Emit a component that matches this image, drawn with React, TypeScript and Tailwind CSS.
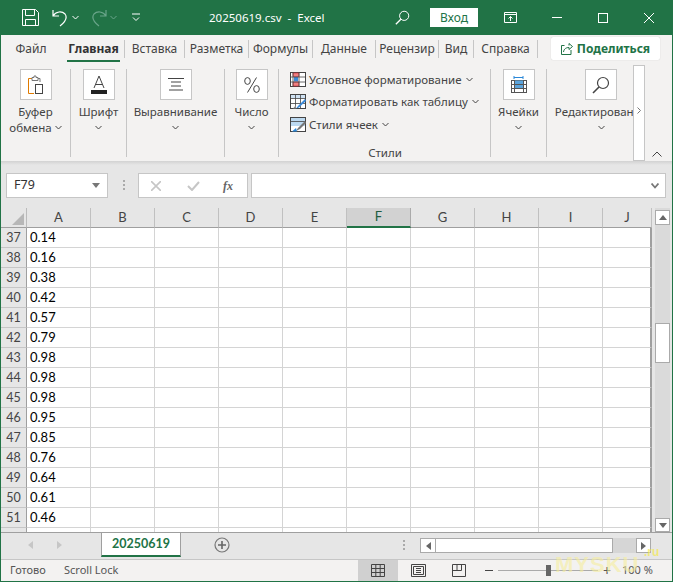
import React from 'react'

const tabs = [
  { label: 'Вставка', w: 59 },
  { label: 'Разметка', w: 63 },
  { label: 'Формулы', w: 63 },
  { label: 'Данные', w: 62 },
  { label: 'Рецензир', w: 62 },
  { label: 'Вид', w: 34 },
  { label: 'Справка', w: 63 },
]

const cols = ['A', 'B', 'C', 'D', 'E', 'F', 'G', 'H', 'I', 'J']

const rows = [
  [37, '0.14'], [38, '0.16'], [39, '0.38'], [40, '0.42'], [41, '0.57'],
  [42, '0.79'], [43, '0.98'], [44, '0.98'], [45, '0.98'], [46, '0.95'],
  [47, '0.85'], [48, '0.76'], [49, '0.64'], [50, '0.61'], [51, '0.46'], ['', ''],
]

function Chevron({ className = '' }: { className?: string }) {
  return (
    <svg width="7" height="5" viewBox="0 0 7 5" className={className}>
      <path d="M0.5 1 L3.5 4 L6.5 1" fill="none" stroke="currentColor" strokeWidth="1" />
    </svg>
  )
}

function ClipboardIcon() {
  return (
    <svg width="18" height="20" viewBox="0 0 18 20">
      <path d="M5 3.5H1.5V18.5H7" fill="none" stroke="#e07b00" />
      <path d="M11 3.5H13V7" fill="none" stroke="#777" />
      <path d="M5 5.5V2.5H7V1H9V2.5H11V5.5Z" fill="#fff" stroke="#777" />
      <rect x="8.5" y="9.5" width="7" height="9" fill="#fff" stroke="#444" />
    </svg>
  )
}

function FontIcon() {
  return (
    <svg width="18" height="20" viewBox="0 0 18 20">
      <path d="M4 13 L9 1 L14 13 M5.5 9.5 H12.5" fill="none" stroke="#444" />
      <rect x="1" y="15" width="16" height="4" fill="#222" />
    </svg>
  )
}

function AlignIcon() {
  return (
    <svg width="16" height="15" viewBox="0 0 16 15">
      <path d="M0 1.5H16M3 5H13M3 9H13M1 13H15" fill="none" stroke="#444" />
    </svg>
  )
}

function PercentIcon() {
  return (
    <svg width="16" height="16" viewBox="0 0 16 16">
      <ellipse cx="3.5" cy="4" rx="2.8" ry="3.4" fill="none" stroke="#444" />
      <ellipse cx="12.5" cy="12" rx="2.8" ry="3.4" fill="none" stroke="#444" />
      <path d="M12.5 0.5L3.5 15.5" fill="none" stroke="#444" />
    </svg>
  )
}

function SearchIcon({ color = '#444', size = 18 }: { color?: string; size?: number }) {
  return (
    <svg width={size} height={size} viewBox="0 0 18 18">
      <circle cx="11" cy="7" r="5.5" fill="none" stroke={color} strokeWidth="1.2" />
      <path d="M7 11 L1 17" fill="none" stroke={color} strokeWidth="1.6" />
    </svg>
  )
}

function CellsIcon() {
  return (
    <svg width="16" height="18" viewBox="0 0 16 18">
      <path d="M3 1.5H12M3 0V3M12 0V3" fill="none" stroke="#2b88d8" />
      <rect x="0.5" y="4.5" width="15" height="12" fill="#fff" stroke="#555" />
      <rect x="3.5" y="4.5" width="9" height="8" fill="#5ba4dc" />
      <path d="M0 8.5H16M0 12.5H16M3.5 4V17M12.5 4V17" fill="none" stroke="#555" />
    </svg>
  )
}

function CondFormatIcon() {
  return (
    <svg width="16" height="15" viewBox="0 0 16 15">
      <rect x="0.5" y="0.5" width="15" height="14" fill="#fff" stroke="#444" />
      <rect x="3" y="1" width="6" height="3.5" fill="#f08080" stroke="#c23" strokeWidth="0.6" />
      <rect x="4" y="5" width="4" height="4.5" fill="#3b8ad9" />
      <rect x="3" y="10" width="6" height="4" fill="#f08080" stroke="#c23" strokeWidth="0.6" />
      <path d="M0 5H16M0 10H16M3 0V15M9 0V15" fill="none" stroke="#444" strokeWidth="0.8" />
    </svg>
  )
}

function TableFormatIcon() {
  return (
    <svg width="16" height="15" viewBox="0 0 16 15">
      <rect x="0.5" y="0.5" width="15" height="14" fill="#fff" stroke="#444" />
      <rect x="1" y="1" width="14" height="3" fill="#cfe2f3" />
      <path d="M0 4.5H16M0 9.5H16M5.5 0V15M10.5 0V15" fill="none" stroke="#444" strokeWidth="0.8" />
      <path d="M15 5 L8 12 L6 14.5 L9 13.5 L16 7Z" fill="#3b8ad9" />
      <path d="M6 11 L3 14.5H6Z" fill="#888" />
    </svg>
  )
}

function CellStyleIcon() {
  return (
    <svg width="16" height="15" viewBox="0 0 16 15">
      <rect x="0.5" y="0.5" width="15" height="14" fill="#fff" stroke="#444" />
      <rect x="1" y="1" width="14" height="8" fill="#bcd9f0" />
      <path d="M0 4.5H16" fill="none" stroke="#444" strokeWidth="0.8" />
      <path d="M15 4 L8 11 L6 14 L10 12 L16 6Z" fill="#777" />
      <path d="M6 11 L2 14.5H7Z" fill="#2b88d8" />
    </svg>
  )
}

function RibbonGroup({ w, icon, lines, innerChevron }: { w: number; icon: React.ReactNode; lines: string[]; innerChevron?: boolean }) {
  return (
    <>
      <div className="flex flex-col items-center pt-[7px] shrink-0" style={{ width: w }}>
        <div className="w-[32px] h-[31px] bg-white border border-[#c6c6c6] flex items-center justify-center">{icon}</div>
        <div className="mt-[4px] text-center leading-[16px] whitespace-nowrap">
          {lines.map((l, i) => (
            <div key={l}>
              {l}
              {innerChevron && i === lines.length - 1 && <Chevron className="inline ml-[3px] mb-[2px]" />}
            </div>
          ))}
          {!innerChevron && <Chevron className="mx-auto mt-[5px]" />}
        </div>
      </div>
      <i className="w-px h-[88px] mt-[7px] bg-[#c6c6c6] shrink-0" />
    </>
  )
}

function StyleRow({ icon, label }: { icon: React.ReactNode; label: string }) {
  return (
    <div className="h-[23px] flex items-center gap-[3px] whitespace-nowrap">
      {icon}
      <span>{label}</span>
      <Chevron className="ml-[1px]" />
    </div>
  )
}

export default function App() {
  return (
    <div className="relative w-[673px] h-[582px] overflow-hidden bg-[#f3f2f1] border-x border-b border-[#217346] text-[12px] text-[#444] flex flex-col font-['Noto_Sans',sans-serif]">
      {/* title bar */}
      <div className="h-[35px] -mx-px shrink-0 bg-[#217346] text-white flex items-center">
        <svg width="17" height="17" viewBox="0 0 17 17" className="ml-[22px] shrink-0">
          <path d="M0.5 0.5H13.5L16.5 3.5V16.5H0.5Z M3.5 0.5V6.5H12.5V0.5 M3.5 16.5V10.5H13.5V16.5" fill="none" stroke="#fff" />
        </svg>
        <svg width="16" height="18" viewBox="0 0 16 18" className="ml-[13px] shrink-0">
          <path d="M1 1V7H7 M1 7 C4 2 10 2 13 5 C16 9 13 13 8 17" fill="none" stroke="#fff" strokeWidth="1.2" />
        </svg>
        <Chevron className="ml-[4px] shrink-0" />
        <svg width="16" height="18" viewBox="0 0 16 18" className="ml-[12px] shrink-0">
          <path d="M15 1V7H9 M15 7 C12 2 6 2 3 5 C0 9 3 13 8 17" fill="none" stroke="#6aa58a" strokeWidth="1.2" />
        </svg>
        <Chevron className="ml-[3px] text-[#6aa58a] shrink-0" />
        <svg width="8" height="9" viewBox="0 0 8 9" className="ml-[15px] shrink-0">
          <path d="M0 1H8M1 4.5L4 7.5L7 4.5" fill="none" stroke="#fff" />
        </svg>
        <div className="ml-[69px] w-[112px] shrink-0 whitespace-nowrap text-[11.5px]">20250619.csv&nbsp; -&nbsp; Excel</div>
        <div className="ml-[74px] shrink-0"><SearchIcon color="#fff" size={15} /></div>
        <div className="ml-[20px] w-[48px] h-[19px] shrink-0 bg-white text-[#217346] flex items-center justify-center text-[12px]">Вход</div>
        <svg width="13" height="11" viewBox="0 0 13 11" className="ml-[26px] shrink-0">
          <path d="M0.5 0.5H12.5V10.5H0.5Z M0.5 2.5H12.5 M6.5 9V4.5 M4.5 6.5L6.5 4.5L8.5 6.5" fill="none" stroke="#fff" />
        </svg>
        <div className="ml-[35px] w-[10px] h-px shrink-0 bg-white" />
        <div className="ml-[36px] w-[10px] h-[10px] shrink-0 border border-white" />
        <svg width="10" height="10" viewBox="0 0 10 10" className="ml-[36px] shrink-0">
          <path d="M0 0L10 10M10 0L0 10" stroke="#fff" />
        </svg>
      </div>

      {/* ribbon tabs */}
      <div className="h-[27px] shrink-0 flex items-center">
        <div className="w-[60px] text-center">Файл</div>
        <div className="relative ml-[6px] w-[53px] h-full flex items-center justify-center font-bold text-[#333] whitespace-nowrap">
          Главная
          <span className="absolute left-0 right-0 bottom-0 h-[2px] bg-[#217346]" />
        </div>
        <div className="w-[4px]" />
        <i className="w-px h-[18px] bg-[#c6c6c6]" />
        {tabs.map((t) => (
          <React.Fragment key={t.label}>
            <div className="text-center whitespace-nowrap" style={{ width: t.w }}>{t.label}</div>
            <i className="w-px h-[18px] bg-[#c6c6c6]" />
          </React.Fragment>
        ))}
        <div className="ml-[13px] w-[109px] h-[23px] bg-white rounded-[2px] shadow-[0_0_1px_#bbb] flex items-center justify-center gap-[4px] font-bold text-[#217346]">
          <svg width="12" height="12" viewBox="0 0 12 12">
            <path d="M3.5 2.5H0.5V11.5H10V7 M2.5 9C3 5.5 5.5 4.5 8 4.5V6.5L11.5 3.5L8 0.5V2.5" fill="none" stroke="#217346" />
          </svg>
          Поделиться
        </div>
      </div>

      {/* ribbon */}
      <div className="h-[99px] shrink-0 flex text-[11.5px]">
        <RibbonGroup w={69} icon={<ClipboardIcon />} lines={['Буфер', 'обмена']} innerChevron />
        <RibbonGroup w={55} icon={<FontIcon />} lines={['Шрифт']} />
        <RibbonGroup w={97} icon={<AlignIcon />} lines={['Выравнивание']} />
        <RibbonGroup w={53} icon={<PercentIcon />} lines={['Число']} />
        <div className="w-[211px] shrink-0 flex flex-col pl-[11px] pt-[6px]">
          <StyleRow icon={<CondFormatIcon />} label="Условное форматирование" />
          <StyleRow icon={<TableFormatIcon />} label="Форматировать как таблицу" />
          <StyleRow icon={<CellStyleIcon />} label="Стили ячеек" />
          <div className="mt-[8px] pr-[10px] text-center">Стили</div>
        </div>
        <i className="w-px h-[88px] mt-[7px] bg-[#c6c6c6] shrink-0" />
        <RibbonGroup w={55} icon={<CellsIcon />} lines={['Ячейки']} />
        <div className="w-[86px] shrink-0 overflow-hidden">
          <div className="w-[108px] flex flex-col items-center pt-[7px]">
            <div className="w-[32px] h-[31px] bg-white border border-[#c6c6c6] flex items-center justify-center"><SearchIcon /></div>
            <div className="mt-[4px] leading-[16px] whitespace-nowrap">Редактирование</div>
            <Chevron className="mt-[5px]" />
          </div>
        </div>
        <div className="w-[12px] h-[96px] mt-[3px] bg-white border border-[#c6c6c6] flex items-center justify-center text-[#777] shrink-0">
          <svg width="4" height="7" viewBox="0 0 4 7" className="-mt-[6px]">
            <path d="M0.5 0.5L3.5 3.5L0.5 6.5" fill="none" stroke="currentColor" />
          </svg>
        </div>
        <svg width="10" height="6" viewBox="0 0 10 6" className="ml-[7px] mt-[89px]">
          <path d="M0.5 5.5L5 1L9.5 5.5" fill="none" stroke="#444" />
        </svg>
      </div>

      {/* formula bar */}
      <div className="h-[47px] shrink-0 bg-[#e6e6e6] bg-[linear-gradient(#d2d2d2,#e6e6e6_4px)] flex items-start pt-[12px] pl-[5px]">
        <div className="w-[102px] h-[25px] bg-white border border-[#c6c6c6] flex items-center justify-between pl-[7px] pr-[7px] text-[#333] text-[12.5px]">
          F79
          <svg width="8" height="5" viewBox="0 0 8 5"><path d="M0 0H8L4 5Z" fill="#777" /></svg>
        </div>
        <div className="ml-[15px] mt-[7px] w-[2px] flex flex-col gap-[2px]">
          <i className="h-[2px] bg-[#aaa]" /><i className="h-[2px] bg-[#aaa]" /><i className="h-[2px] bg-[#aaa]" />
        </div>
        <div className="ml-[13px] w-[110px] h-[25px] bg-white border border-[#c6c6c6] flex items-center pl-[12px]">
          <svg width="10" height="10" viewBox="0 0 10 10"><path d="M0 0L10 10M10 0L0 10" stroke="#c6c6c6" strokeWidth="1.6" /></svg>
          <svg width="13" height="10" viewBox="0 0 13 10" className="ml-[26px]"><path d="M1 5L5 9L12 1" fill="none" stroke="#c6c6c6" strokeWidth="2" /></svg>
          <span className="ml-[23px] italic font-['Liberation_Serif',serif] font-bold text-[#666] text-[12px]">fx</span>
        </div>
        <div className="ml-[3px] w-[415px] h-[25px] bg-white border border-[#c6c6c6] flex items-center justify-end pr-[6px]">
          <svg width="8" height="6" viewBox="0 0 8 6"><path d="M0.5 0.5L4 4.5L7.5 0.5" fill="none" stroke="#777" strokeWidth="1.8" /></svg>
        </div>
      </div>

      {/* sheet */}
      <div className="h-[324px] shrink-0 flex bg-[#e6e6e6]">
        <div className="w-[651px] shrink-0 h-full overflow-hidden grid grid-cols-[26px_repeat(9,64px)_49px] grid-rows-[20px] auto-rows-[20px] text-[#444]">
          <div className="bg-[#e6e6e6] border-b border-[#9f9f9f] border-r border-r-[#bbb] flex items-end justify-end p-[2px]">
            <svg width="12" height="12" viewBox="0 0 12 12"><path d="M12 0V12H0Z" fill="#b7b7b7" /></svg>
          </div>
          {cols.map((c) => (
            <div
              key={c}
              className={c === 'F'
                ? 'bg-[#d2d2d2] border-b-2 border-b-[#217346] border-r border-r-[#aaa] flex items-center justify-center text-[13px] text-[#1f5c3f] font-[Lato,sans-serif]'
                : 'bg-[#e6e6e6] border-b border-b-[#9f9f9f] border-r border-r-[#c0c0c0] flex items-center justify-center text-[13px] font-[Lato,sans-serif]'}
            >
              {c}
            </div>
          ))}
          {rows.map(([n, v], i) => (
            <React.Fragment key={i}>
              <div className="bg-[#e6e6e6] border-r border-r-[#9f9f9f] border-b border-b-[#c6c6c6] flex items-center justify-center pt-[1px] text-[12.5px] font-[Lato,sans-serif]">{n}</div>
              {cols.map((c) => (
                <div key={c} className={c === 'J' ? 'bg-white border-b border-b-[#d4d4d4] border-r-2 border-r-[#9f9f9f] ' : 'bg-white border-b border-b-[#d4d4d4] border-r border-r-[#d4d4d4] text-[13px] text-black flex items-center pl-[3px] pt-[1px] font-[Lato,sans-serif]'}>
                  {c === 'A' ? v : ''}
                </div>
              ))}
            </React.Fragment>
          ))}
        </div>
        {/* vertical scroll */}
        <div className="ml-[3px] w-[15px] h-full bg-[#dadada] flex flex-col pt-[2px]">
          <div className="h-[15px] bg-white border border-[#aaa] flex items-center justify-center">
            <svg width="8" height="5" viewBox="0 0 8 5"><path d="M4 0L8 5H0Z" fill="#666" /></svg>
          </div>
          <div className="mt-[98px] h-[40px] bg-white border border-[#aaa]" />
          <div className="mt-[155px] h-[14px] bg-white border border-[#aaa] flex items-center justify-center">
            <svg width="8" height="5" viewBox="0 0 8 5"><path d="M0 0H8L4 5Z" fill="#666" /></svg>
          </div>
        </div>
      </div>

      {/* sheet tabs */}
      <div className="h-[28px] shrink-0 bg-[#e6e6e6] border-t border-[#9f9f9f] border-b border-b-[#c6c6c6] flex items-start">
        <svg width="5" height="8" viewBox="0 0 5 8" className="ml-[27px] mt-[8px]"><path d="M5 0V8L0 4Z" fill="#c6c6c6" /></svg>
        <svg width="5" height="8" viewBox="0 0 5 8" className="ml-[24px] mt-[8px]"><path d="M0 0V8L5 4Z" fill="#c6c6c6" /></svg>
        <div className="ml-[39px] -mt-px w-[80px] h-[25px] bg-white border-x border-[#9f9f9f] border-t border-t-[#9f9f9f] border-b-2 border-b-[#217346] flex items-center justify-center font-bold text-[#217346] text-[12.5px] font-[Lato,sans-serif]">
          20250619
        </div>
        <svg width="16" height="16" viewBox="0 0 16 16" className="ml-[33px] mt-[4px]">
          <circle cx="8" cy="8" r="7" fill="none" stroke="#777" strokeWidth="1.2" />
          <path d="M8 4V12M4 8H12" stroke="#666" strokeWidth="1.6" />
        </svg>
        <div className="ml-[173px] mt-[7px] w-[2px] flex flex-col gap-[2px]">
          <i className="h-[2px] bg-[#aaa]" /><i className="h-[2px] bg-[#aaa]" /><i className="h-[2px] bg-[#aaa]" />
        </div>
        <div className="ml-[15px] mt-[5px] w-[231px] h-[15px] flex bg-[#d6d6d6]">
          <div className="w-[16px] bg-white border border-[#aaa] flex items-center justify-center">
            <svg width="5" height="8" viewBox="0 0 5 8"><path d="M5 0V8L0 4Z" fill="#666" /></svg>
          </div>
          <div className="w-[177px] bg-white border border-[#aaa] border-l-0" />
          <div className="w-[23px]" />
          <div className="w-[15px] bg-white border border-[#aaa] flex items-center justify-center">
            <svg width="5" height="8" viewBox="0 0 5 8"><path d="M0 0V8L5 4Z" fill="#666" /></svg>
          </div>
        </div>
      </div>

      {/* status bar */}
      <div className="flex-1 flex items-center text-[11px] text-[#555]">
        <span className="ml-[9px] w-[54px] shrink-0">Готово</span>
        <span className="w-[54px] shrink-0 whitespace-nowrap">Scroll Lock</span>
        <div className="ml-[240px] w-[40px] h-full shrink-0 bg-[#d0d0d0] flex items-center justify-center">
          <svg width="14" height="13" viewBox="0 0 14 13">
            <path d="M0.5 0.5H13.5V12.5H0.5Z M0 4.5H14M0 8.5H14M4.8 0V13M9.2 0V13" fill="none" stroke="#444" />
          </svg>
        </div>
        <svg width="15" height="13" viewBox="0 0 15 13" className="ml-[13px] shrink-0">
          <path d="M0.5 0.5H14.5V12.5H0.5Z M2.5 2.5H12.5V10.5H2.5Z M5 4.5H10M5 6.5H10M5 8.5H10" fill="none" stroke="#444" />
        </svg>
        <svg width="14" height="13" viewBox="0 0 14 13" className="ml-[26px] shrink-0">
          <path d="M0.5 0.5H13.5V12.5H0.5Z M0.5 6.5H9.5V0.5 M5 0.5V6.5" fill="none" stroke="#444" />
        </svg>
        <div className="ml-[19px] w-[8px] h-px shrink-0 bg-[#444]" />
        <div className="relative ml-[5px] w-[100px] h-px shrink-0 bg-[#aaa]">
          <span className="absolute left-[48px] -top-[5px] w-[5px] h-[11px] bg-[#666]" />
        </div>
        <span className="ml-[5px] w-[8px] shrink-0 text-[14px] leading-none text-[#555]">+</span>
        <span className="ml-[11px] shrink-0 text-[11px] whitespace-nowrap">100 %</span>
      </div>

      {/* site watermark */}
      <div className="absolute left-[554px] top-[554px] text-[22px] tracking-[1px] leading-none font-bold text-[#f6ee9e] opacity-60 font-['Liberation_Sans',sans-serif] pointer-events-none">MYSKU</div>
      <div className="absolute left-[643px] top-[546px] text-[12px] leading-none font-bold text-[#f5e94f] opacity-70 font-['Liberation_Sans',sans-serif] pointer-events-none">.ru</div>
    </div>
  )
}
